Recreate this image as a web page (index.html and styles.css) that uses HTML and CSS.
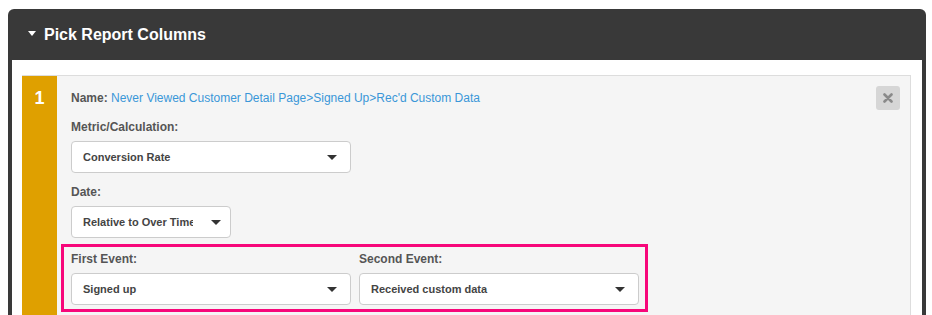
FILE: index.html
```html
<!DOCTYPE html>
<html lang="en">
  <head>
    <meta charset="UTF-8" />
    <title>Pick Report Columns</title>
    <link rel="stylesheet" href="styles.css">
  </head>
  <body>
    <div class="panel">
      <div class="panel-header">
        <span class="caret"></span>
        <h2>Pick Report Columns</h2>
      </div>
      <div class="panel-body">
        <div class="column-card">
          <div class="column-num">1</div>
          <div class="column-body">
            <button class="remove-btn" title="Remove">
              <svg width="10" height="10" viewBox="0 0 10 10">
                <path d="M1.5 1.5 L8.5 8.5 M8.5 1.5 L1.5 8.5" stroke="#8a8a8a" stroke-width="2.6" stroke-linecap="round" />
              </svg>
            </button>
            <div class="name-row">
              <b>Name:</b> <a href="#">Never Viewed Customer Detail Page&gt;Signed Up&gt;Rec'd Custom Data</a>
            </div>

            <div class="field">
              <label>Metric/Calculation:</label>
              <div class="select wide"><span>Conversion Rate</span><i class="arrow"></i></div>
            </div>

            <div class="field tight">
              <label>Date:</label>
              <div class="select narrow"><span>Relative to Over Time</span><i class="arrow"></i></div>
            </div>

            <div class="highlight">
              <div class="field">
                <label>First Event:</label>
                <div class="select wide"><span>Signed up</span><i class="arrow"></i></div>
              </div>
              <div class="field">
                <label>Second Event:</label>
                <div class="select wide"><span>Received custom data</span><i class="arrow"></i></div>
              </div>
            </div>
          </div>
        </div>
      </div>
    </div>
  </body>
</html>
```

FILE: styles.css
```css
body {
  margin: 0;
  padding: 9px 0 0 8px;
  font-family: "Liberation Sans", Arial, sans-serif;
  background: #ffffff;
  overflow: hidden;
}

.panel {
  width: 918px;
  background: #393939;
  border-radius: 6px 6px 0 0;
}

.panel-header {
  height: 51px;
  display: flex;
  align-items: center;
  padding-left: 20px;
  color: #ffffff;
}

.caret {
  width: 0;
  height: 0;
  border-left: 4px solid transparent;
  border-right: 4px solid transparent;
  border-top: 5px solid #ffffff;
  margin-right: 8px;
  margin-top: -2px;
}

.panel-header h2 {
  margin: 0;
  font-size: 16px;
  font-weight: 700;
}

.panel-body {
  margin: 0 4px;
  background: #ffffff;
  padding: 15px 11px 0 10px;
  height: 240px;
}

.column-card {
  display: flex;
  border: 1px solid #dddddd;
  border-left: none;
  height: 240px;
}

.column-num {
  width: 35px;
  background: #dfa000;
  color: #ffffff;
  font-weight: 700;
  font-size: 18px;
  text-align: center;
  padding-top: 12px;
}

.column-body {
  position: relative;
  flex: 1;
  background: #f5f5f5;
  padding: 13px 14px 0 14px;
}

.remove-btn {
  position: absolute;
  top: 10px;
  right: 10px;
  width: 24px;
  height: 24px;
  display: flex;
  align-items: center;
  justify-content: center;
  border: none;
  border-radius: 3px;
  background: #d6d6d6;
  padding: 0;
  cursor: pointer;
}

.name-row {
  font-size: 12px;
  line-height: 18px;
  color: #555555;
  margin-bottom: 11px;
}

.name-row a {
  color: #3a97d8;
  text-decoration: none;
}

.field {
  margin-bottom: 10px;
}

.field.tight {
  margin-bottom: 6px;
}

.field label {
  display: block;
  font-size: 12px;
  font-weight: 700;
  line-height: 18px;
  color: #555555;
  margin-bottom: 5px;
}

.select {
  box-sizing: border-box;
  height: 32px;
  display: flex;
  align-items: center;
  background: #ffffff;
  border: 1px solid #cccccc;
  border-radius: 4px;
  padding: 0 13px 0 11px;
  font-size: 11px;
  font-weight: 700;
  color: #444444;
}

.select span {
  flex: 1;
  white-space: nowrap;
  overflow: hidden;
}

.select.wide {
  width: 280px;
}

.select.narrow {
  width: 160px;
}

.select.narrow span {
  flex: none;
  width: 110px;
  margin-right: 18px;
}

.arrow {
  width: 0;
  height: 0;
  border-left: 5px solid transparent;
  border-right: 5px solid transparent;
  border-top: 5px solid #333333;
}

.highlight {
  display: flex;
  gap: 8px;
  width: 571px;
  margin-left: -10px;
  padding: 3px 3px 4px 7px;
  border: 3px solid #f7077a;
}

.highlight .field {
  margin-bottom: 0;
}
```
